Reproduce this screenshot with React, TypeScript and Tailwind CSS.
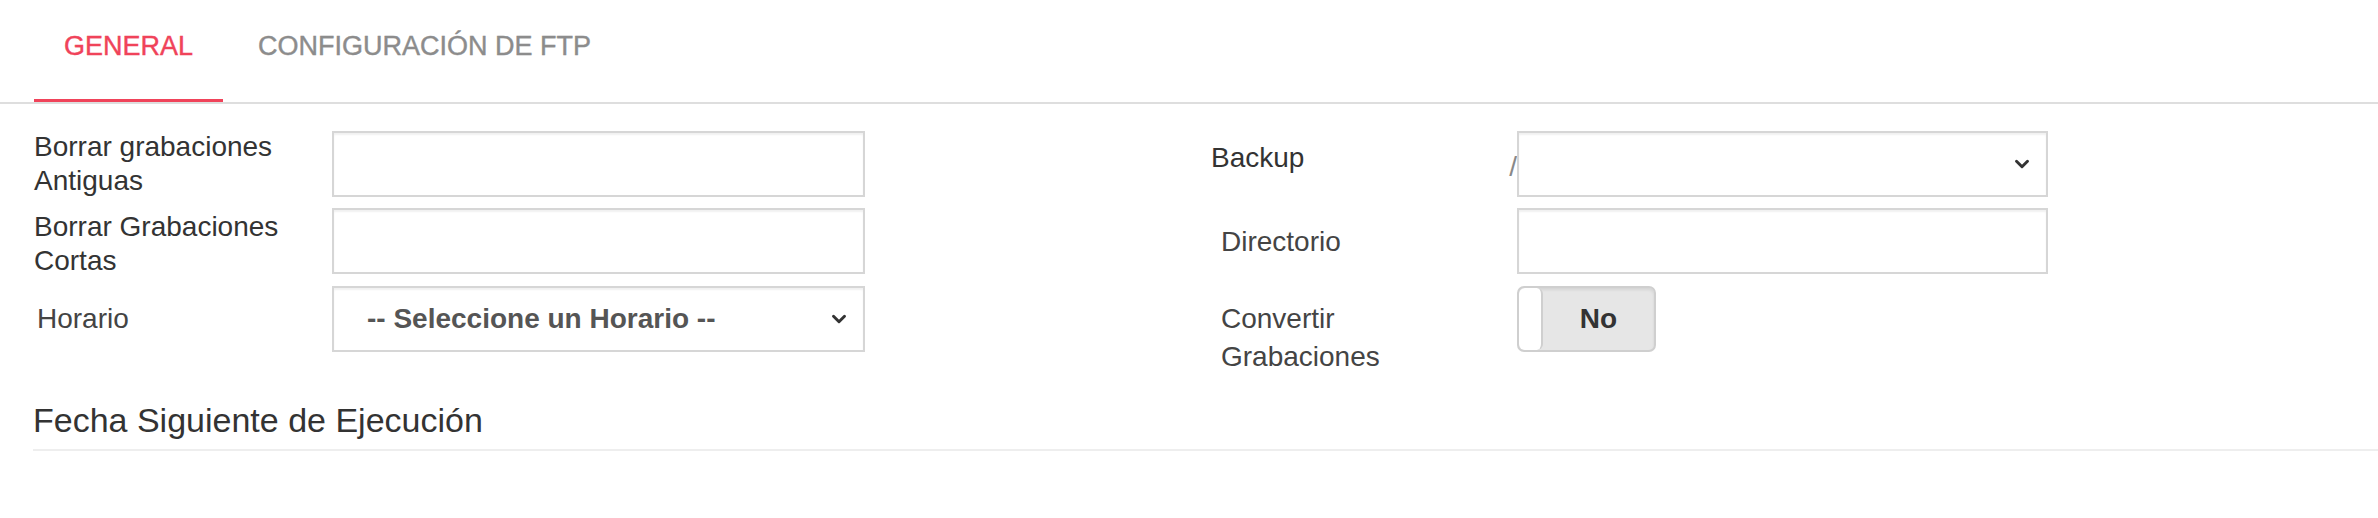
import { ChevronDown } from "lucide-react"

const font = { fontFamily: '"Liberation Sans", Arial, sans-serif' }

function TextInput() {
  return (
    <input
      type="text"
      className="h-[66px] w-full border-2 border-[#d6d6d6] bg-white px-4 text-[28px] text-[#555] shadow-[inset_0_2px_2px_rgba(0,0,0,0.06)] outline-none"
    />
  )
}

function SelectBox({ value }: { value?: string }) {
  return (
    <div className="relative flex h-[66px] w-full items-center border-2 border-[#d6d6d6] bg-white shadow-[inset_0_2px_2px_rgba(0,0,0,0.06)]">
      {value && <span className="pl-[33px] text-[28px] font-bold text-[#555]">{value}</span>}
      <ChevronDown className="absolute right-[13px] h-[22px] w-[22px] text-[#333]" strokeWidth={3.2} />
    </div>
  )
}

function Toggle() {
  return (
    <div className="flex h-[66px] w-[139px] overflow-hidden rounded-[7px] border-2 border-[#cfcfcf] bg-[#e6e6e6] shadow-[inset_0_2px_3px_rgba(0,0,0,0.08)]">
      <div className="w-[24px] rounded-[6px] border-r-2 border-[#cfcfcf] bg-white" />
      <div className="flex flex-1 items-center justify-center text-[28px] font-bold text-[#333]">No</div>
    </div>
  )
}

export default function App() {
  return (
    <div className="min-h-[518px] w-[2378px] bg-white text-[#333]" style={font}>
      {/* Tabs */}
      <div className="flex h-[104px] gap-[5px] border-b-2 border-[#dedede] pl-[34px]">
        <div className="h-[102px] border-b-[3px] border-[#f0435a] px-[30px] pt-[33px] text-[27px] leading-[27px] text-[#f0435a] [-webkit-text-stroke:0.4px_#f0435a]">
          GENERAL
        </div>
        <div className="h-[102px] px-[30px] pt-[33px] text-[27px] leading-[27px] text-[#8c8c8c] [-webkit-text-stroke:0.4px_#8c8c8c]">
          CONFIGURACIÓN DE FTP
        </div>
      </div>

      {/* Form */}
      <div className="grid grid-cols-2 pt-[27px]">
        <div className="flex flex-col pl-[34px]">
          <div className="flex h-[66px] items-center">
            <label className="w-[298px] text-[28px] leading-[34px]">
              Borrar grabaciones
              <br />
              Antiguas
            </label>
            <div className="w-[533px]">
              <TextInput />
            </div>
          </div>
          <div className="mt-[11px] flex h-[66px] items-center">
            <label className="w-[298px] pt-[6px] text-[28px] leading-[34px]">
              Borrar Grabaciones
              <br />
              Cortas
            </label>
            <div className="w-[533px]">
              <TextInput />
            </div>
          </div>
          <div className="mt-[12px] flex h-[66px] items-center">
            <label className="w-[298px] pl-[3px] text-[28px] leading-[34px] text-[#444]">Horario</label>
            <div className="w-[533px]">
              <SelectBox value="-- Seleccione un Horario --" />
            </div>
          </div>
        </div>

        <div className="flex flex-col pl-[22px]">
          <div className="flex h-[66px] items-start">
            <label className="relative w-[306px] pt-[8px] text-[28px] leading-[38px]">
              Backup
              <span className="absolute right-[0px] top-[22px] text-[28px] leading-[28px] font-light text-[#888]">/</span>
            </label>
            <div className="w-[531px]">
              <SelectBox />
            </div>
          </div>
          <div className="mt-[11px] flex h-[66px] items-start">
            <label className="w-[306px] pl-[10px] pt-[15px] text-[28px] leading-[38px] text-[#444]">Directorio</label>
            <div className="w-[531px]">
              <TextInput />
            </div>
          </div>
          <div className="mt-[12px] flex items-start">
            <label className="w-[306px] pl-[10px] pt-[14px] text-[28px] leading-[38px] text-[#444]">
              Convertir
              <br />
              Grabaciones
            </label>
            <Toggle />
          </div>
        </div>
      </div>

      {/* Section heading */}
      <div className="ml-[33px] mt-[24px] border-b-2 border-[#eeeeee] pb-[9px]">
        <h3 className="text-[34px] leading-[40px] text-[#333]">Fecha Siguiente de Ejecución</h3>
      </div>
    </div>
  )
}
